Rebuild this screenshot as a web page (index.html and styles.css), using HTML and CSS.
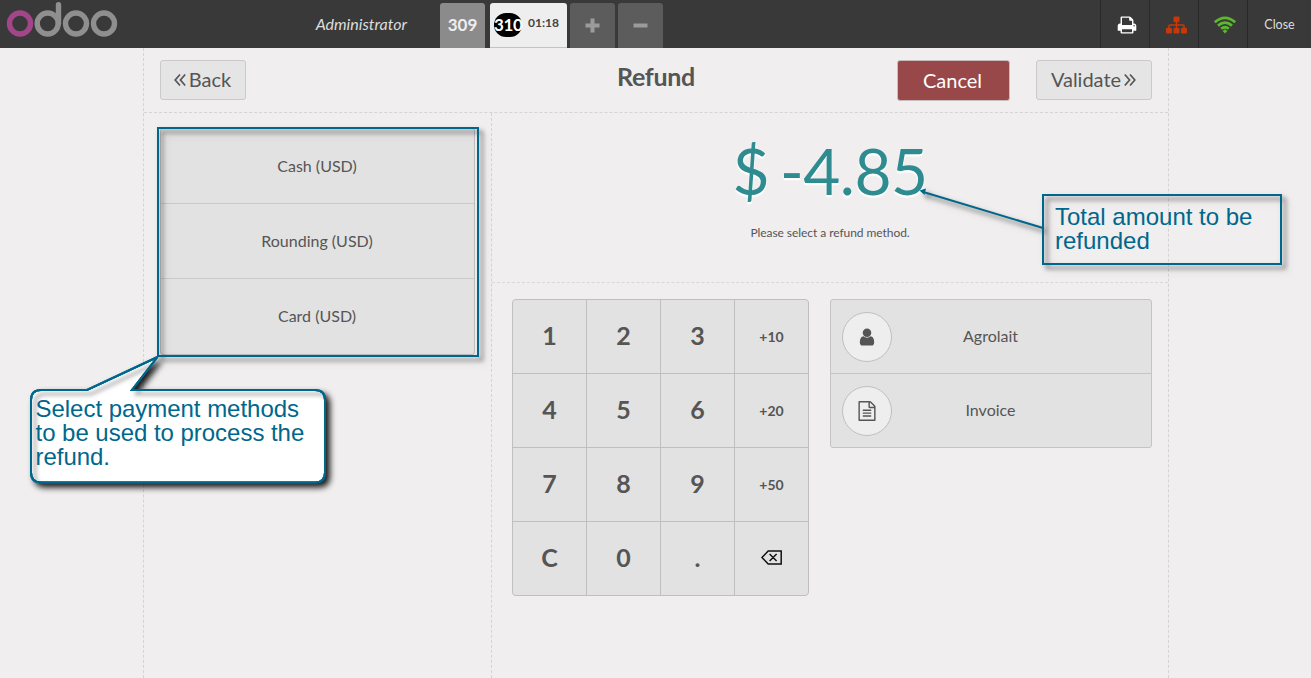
FILE: index.html
```html
<!DOCTYPE html>
<html lang="en">
<head>
<meta charset="utf-8">
<title>Refund</title>
<link rel="stylesheet" href="styles.css">
</head>
<body>
<header class="topbar">
  <svg class="logo" width="112" height="38" viewBox="0 0 112 38" fill="none" stroke="#8f8f8f" stroke-width="5.4">
    <circle cx="14" cy="21.5" r="10.5" stroke="#a24689"/>
    <circle cx="41.7" cy="21.5" r="10.5"/>
    <path d="M52.5 21.5V2.8" stroke-linecap="round"/>
    <circle cx="70" cy="21.5" r="10.5"/>
    <circle cx="98" cy="21.5" r="10.5"/>
  </svg>
  <span class="user">Administrator</span>
  <nav class="orders">
    <div class="order">309</div>
    <div class="order selected"><span class="seq">310</span><span class="time">01:18</span></div>
    <div class="order square"><svg width="15" height="15" viewBox="0 0 15 15"><path d="M5.5 0.5h4v5h5v4h-5v5h-4v-5h-5v-4h5z" fill="#9b9b9b"/></svg></div>
    <div class="order square"><svg width="15" height="15" viewBox="0 0 15 15"><path d="M0.5 5.5h14v4h-14z" fill="#9b9b9b"/></svg></div>
  </nav>
  <div class="status">
    <div class="status-item"><svg width="20" height="20" viewBox="0 0 1792 1792" fill="#fff"><path d="M448 1536h896v-256h-896v256zm0-640h896v-384h-160q-40 0-68-28t-28-68v-160h-640v640zm1152 64q0-26-19-45t-45-19-45 19-19 45 19 45 45 19 45-19 19-45zm128 0v416q0 13-9.5 22.5t-22.5 9.5h-224v160q0 40-28 68t-68 28h-960q-40 0-68-28t-28-68v-160h-224q-13 0-22.5-9.5t-9.5-22.5v-416q0-79 56.5-135.5t135.5-56.5h64v-544q0-40 28-68t68-28h672q40 0 88 20t76 48l152 152q28 28 48 76t20 88v256h64q79 0 135.5 56.5t56.5 135.5z"/></svg></div>
    <div class="status-item"><svg width="21" height="20" viewBox="0 0 1792 1792" preserveAspectRatio="none" fill="#c63806"><path d="M1792 1248v320q0 40-28 68t-68 28h-320q-40 0-68-28t-28-68v-320q0-40 28-68t68-28h96v-192h-512v192h96q40 0 68 28t28 68v320q0 40-28 68t-68 28h-320q-40 0-68-28t-28-68v-320q0-40 28-68t68-28h96v-192h-512v192h96q40 0 68 28t28 68v320q0 40-28 68t-68 28h-320q-40 0-68-28t-28-68v-320q0-40 28-68t68-28h96v-192q0-52 38-90t90-38h512v-192h-96q-40 0-68-28t-28-68v-320q0-40 28-68t68-28h320q40 0 68 28t28 68v320q0 40-28 68t-68 28h-96v192h512q52 0 90 38t38 90v192h96q40 0 68 28t28 68z"/></svg></div>
    <div class="status-item"><svg width="24" height="18" viewBox="0 0 24 18" fill="none" stroke="#5cb82e" stroke-width="2.8"><path d="M1.8 6.2Q12 -2.4 22.2 6.2M5 9.6Q12 3.6 19 9.6M8.2 12.8Q12 9.6 15.8 12.8"/><path d="M12 13.2L14.4 15L12 17.4L9.600 15z" fill="#5cb82e" stroke="none"/></svg></div>
    <div class="status-item close">Close</div>
  </div>
</header>

<main class="screen">
  <div class="heading">
    <div class="button"><svg width="12" height="14" viewBox="0 0 12 14" fill="none" stroke="#555" stroke-width="1.7"><path d="M6 1.5L1.2 7L6 12.5M11.2 1.5L6.4 7L11.2 12.5"/></svg>Back</div>
    <h1>Refund</h1>
    <div class="button cancel">Cancel</div>
    <div class="button">Validate<svg width="12" height="14" viewBox="0 0 12 14" fill="none" stroke="#555" stroke-width="1.7"><path d="M0.8 1.5L5.6 7L0.8 12.5M6 1.5L10.8 7L6 12.5"/></svg></div>
  </div>
  <div class="columns">
    <section class="methods-pane">
      <div class="methods">
        <div class="method">Cash (USD)</div>
        <div class="method">Rounding (USD)</div>
        <div class="method">Card (USD)</div>
      </div>
    </section>
    <section class="detail">
      <div class="total-pane">
        <div class="total">$ -4.85</div>
        <div class="hint">Please select a refund method.</div>
      </div>
      <div class="controls">
        <div class="numpad">
          <div class="key">1</div><div class="key">2</div><div class="key">3</div><div class="key mode">+10</div>
          <div class="key">4</div><div class="key">5</div><div class="key">6</div><div class="key mode">+20</div>
          <div class="key">7</div><div class="key">8</div><div class="key">9</div><div class="key mode">+50</div>
          <div class="key">C</div><div class="key">0</div><div class="key">.</div>
          <div class="key"><svg width="21" height="15" viewBox="0 0 21 15" fill="none" stroke="#111" stroke-width="1.5"><path d="M7.2 0.9H20.2V14.1H7.2L1 7.5zM8.6 4L15.6 11M15.6 4L8.6 11"/></svg></div>
        </div>
        <div class="options">
          <div class="option"><span class="disc"><svg width="20" height="20" viewBox="0 0 1792 1792" fill="#555"><path d="M1536 1399q0 109-62.5 187t-150.5 78h-854q-88 0-150.5-78t-62.5-187q0-85 8.5-160.5t31.5-152 58.5-131 94-89 134.5-34.5q131 128 313 128t313-128q76 0 134.5 34.5t94 89 58.5 131 31.5 152 8.5 160.5zm-256-887q0 159-112.5 271.5t-271.5 112.5-271.5-112.5-112.5-271.5 112.5-271.5 271.5-112.5 271.5 112.5 112.5 271.5z"/></svg></span><span class="label">Agrolait</span></div>
          <div class="option"><span class="disc"><svg width="20" height="20" viewBox="0 0 1792 1792" fill="#555"><path d="M1596 380q28 28 48 76t20 88v1152q0 40-28 68t-68 28h-1344q-40 0-68-28t-28-68v-1600q0-40 28-68t68-28h896q40 0 88 20t76 48zm-444-244v376h376q-10-29-22-41l-313-313q-12-12-41-22zm384 1528v-1024h-416q-40 0-68-28t-28-68v-416h-768v1536h1280zm-1024-864q0-14 9-23t23-9h704q14 0 23 9t9 23v64q0 14-9 23t-23 9h-704q-14 0-23-9t-9-23v-64zm736 224q14 0 23 9t9 23v64q0 14-9 23t-23 9h-704q-14 0-23-9t-9-23v-64q0-14 9-23t23-9h704zm0 256q14 0 23 9t9 23v64q0 14-9 23t-23 9h-704q-14 0-23-9t-9-23v-64q0-14 9-23t23-9h704z"/></svg></span><span class="label">Invoice</span></div>
        </div>
      </div>
    </section>
  </div>
</main>

<svg class="annotations" width="1311" height="678" viewBox="0 0 1311 678" fill="none" stroke="#00678c" stroke-width="2">
  <g class="soft">
    <rect x="158" y="128" width="320" height="228"/>
    <rect x="1043" y="195" width="238" height="69"/>
    <path d="M1043 228L925 192.500"/>
    <path d="M919.500 190.500L926 188.500L924.500 195z" fill="#00678c" stroke="none"/>
  </g>
  <path class="hard" fill="#fff" d="M41 390H87L157.500 357L132 390H315Q325 390 325 400V472.500Q325 482.500 315 482.500H41Q31 482.500 31 472.500V400Q31 390 41 390z"/>
  <g clip-path="url(#bubble)"><path class="inset" d="M41 390H87L157.500 357L132 390H315Q325 390 325 400V472.500Q325 482.500 315 482.500H41Q31 482.500 31 472.500V400Q31 390 41 390z"/></g>
  <path d="M41 390H87L157.500 357L132 390H315Q325 390 325 400V472.500Q325 482.500 315 482.500H41Q31 482.500 31 472.500V400Q31 390 41 390z"/>
  <clipPath id="bubble"><path d="M41 390H87L157.500 357L132 390H315Q325 390 325 400V472.500Q325 482.500 315 482.500H41Q31 482.500 31 472.500V400Q31 390 41 390z"/></clipPath>
</svg>
<div class="note methods-note">Select payment methods<br>to be used to process the<br>refund.</div>
<div class="note total-note">Total amount to be<br>refunded</div>
</body>
</html>
```
FILE: styles.css
```css
* { box-sizing: border-box; }
body {
  margin: 0;
  width: 1311px;
  height: 678px;
  overflow: hidden;
  position: relative;
  display: flex;
  flex-direction: column;
  background: #f0eeee;
  color: #555;
  font-family: Lato, "Liberation Sans", sans-serif;
  font-size: 16px;
}
svg { display: block; flex: none; }

.topbar {
  height: 48px;
  flex: none;
  display: flex;
  background: #393939;
}
.logo { margin: 2px 0 0 6px; }
.user {
  width: 322px;
  padding-right: 33px;
  text-align: right;
  font-style: italic;
  line-height: 47px;
  color: #ddd;
}
.orders { display: flex; gap: 3px; padding-top: 3px; }
.order {
  width: 45px;
  height: 45px;
  display: flex;
  align-items: center;
  justify-content: center;
  border-radius: 3px 3px 0 0;
  background: #8b8b8b;
  color: #eee;
  font-size: 17px;
  font-weight: 700;
  line-height: 20px;
  padding-bottom: 2px;
}
.order.selected {
  width: 77px;
  margin-left: 2px;
  gap: 6px;
  padding: 0 4px 1px 0;
  background: #eee;
  border-bottom: 1px solid #c3c3c3;
}
.order.square { background: #5c5c5c; padding-bottom: 0; }
.seq {
  width: 28px;
  height: 24px;
  line-height: 23px;
  border-radius: 12px;
  background: #000;
  color: #fff;
  text-align: center;
  letter-spacing: -0.4px;
}
.time { font-size: 12px; color: #444; padding-bottom: 3px; }
.status { display: flex; margin-left: auto; }
.status-item {
  width: 49px;
  display: flex;
  align-items: center;
  justify-content: center;
  padding: 1px 0 0 4px;
  border-left: 1px solid #292929;
}
.status-item.close {
  width: 64px;
  padding: 0;
  font-size: 12.5px;
  color: #ddd;
}

.screen {
  width: 1026px;
  flex: 1;
  margin-left: 143px;
  display: flex;
  flex-direction: column;
  border: dashed #d5d3d3;
  border-width: 0 1px;
}
.heading {
  height: 65px;
  flex: none;
  display: grid;
  grid-template-columns: 86px 1fr 113px 116px;
  align-items: start;
  padding: 12px 16px 0;
  border-bottom: 1px dashed #d5d3d3;
}
.button {
  height: 40px;
  display: flex;
  align-items: center;
  justify-content: center;
  gap: 3px;
  border: 1px solid #cacaca;
  border-radius: 3px;
  background: #e5e5e5;
  font-size: 20px;
  line-height: 24px;
  padding: 0 1px 2px 0;
}
.button svg { margin-top: 2px; }
.heading h1 {
  margin: 1px 0 0;
  padding-left: 143px;
  text-align: center;
  font-size: 25px;
  line-height: 30px;
  font-weight: 700;
  letter-spacing: -0.3px;
}
.button.cancel {
  height: 41px;
  margin: 0 26px 0 -26px;
  padding-right: 2px;
  background: #984848;
  border-color: #cabcbc;
  color: #fff;
}
.columns { flex: 1; display: flex; }
.methods-pane {
  width: 348px;
  padding: 15px 16px;
  border-right: 1px dashed #d5d3d3;
}
.methods {
  border: 1px solid #bfbfbf;
  border-radius: 3px;
  background: #e2e2e2;
  width: 315px;
}
.method {
  height: 75px;
  line-height: 74px;
  padding-right: 1px;
  text-align: center;
  border-bottom: 1px solid #cacaca;
}
.method:last-child { border-bottom: 0; }
.detail { flex: 1; }
.total-pane {
  height: 170px;
  text-align: center;
  border-bottom: 1px dashed #d9d7d7;
}
.total {
  padding-top: 19px;
  font-size: 64px;
  line-height: 77px;
  color: #2e8b8f;
  letter-spacing: -0.5px;
  word-spacing: -5px;
  text-shadow: 0 2px #fff, 0 2px 2px #fff;
}
.hint { padding-top: 16px; font-size: 12px; line-height: 16px; letter-spacing: -0.06px; }
.controls {
  display: flex;
  justify-content: space-between;
  align-items: flex-start;
  padding: 16px 16px 0 20px;
}
.numpad {
  display: grid;
  grid-template-columns: repeat(4, 73px);
  grid-auto-rows: 73px;
  gap: 1px;
  background: #bfbfbf;
  border: 1px solid #bfbfbf;
  border-radius: 4px;
  overflow: hidden;
}
.key {
  display: flex;
  align-items: center;
  justify-content: center;
  background: #e2e2e2;
  font-size: 25px;
  font-weight: 700;
  padding-bottom: 3px;
}
.key.mode { font-size: 14px; padding-bottom: 0; }
.options {
  width: 322px;
  border: 1px solid #c4c4c4;
  border-radius: 3px;
  background: #e2e2e2;
}
.option {
  height: 73px;
  display: grid;
  grid-template-columns: 50px 1fr 50px;
  align-items: center;
  padding: 1px 11px 0;
  text-align: center;
}
.option + .option { height: 74px; border-top: 1px solid #c4c4c4; }
.label { padding: 0 1px 3px 0; }
.disc {
  width: 50px;
  height: 50px;
  display: flex;
  align-items: center;
  justify-content: center;
  border: 1px solid #bfbfbf;
  border-radius: 50%;
  background: #eee;
}

.annotations { position: absolute; left: 0; top: 0; }
.soft { filter: drop-shadow(4px 4px 2px rgba(0, 0, 0, 0.4)) drop-shadow(3px 3px 3px rgba(0, 0, 0, 0.2)); }
.hard { filter: drop-shadow(4px 4px 3px rgba(0, 0, 0, 0.9)); }
.inset { filter: drop-shadow(4px 4px 2px rgba(0, 0, 0, 0.45)); }
.note {
  position: absolute;
  font-family: "Liberation Sans", Arial, sans-serif;
  font-size: 24px;
  line-height: 24px;
  color: #00678c;
  white-space: nowrap;
}
.methods-note { left: 35.5px; top: 397px; letter-spacing: -0.03px; }
.total-note { left: 1055px; top: 205px; }
```
